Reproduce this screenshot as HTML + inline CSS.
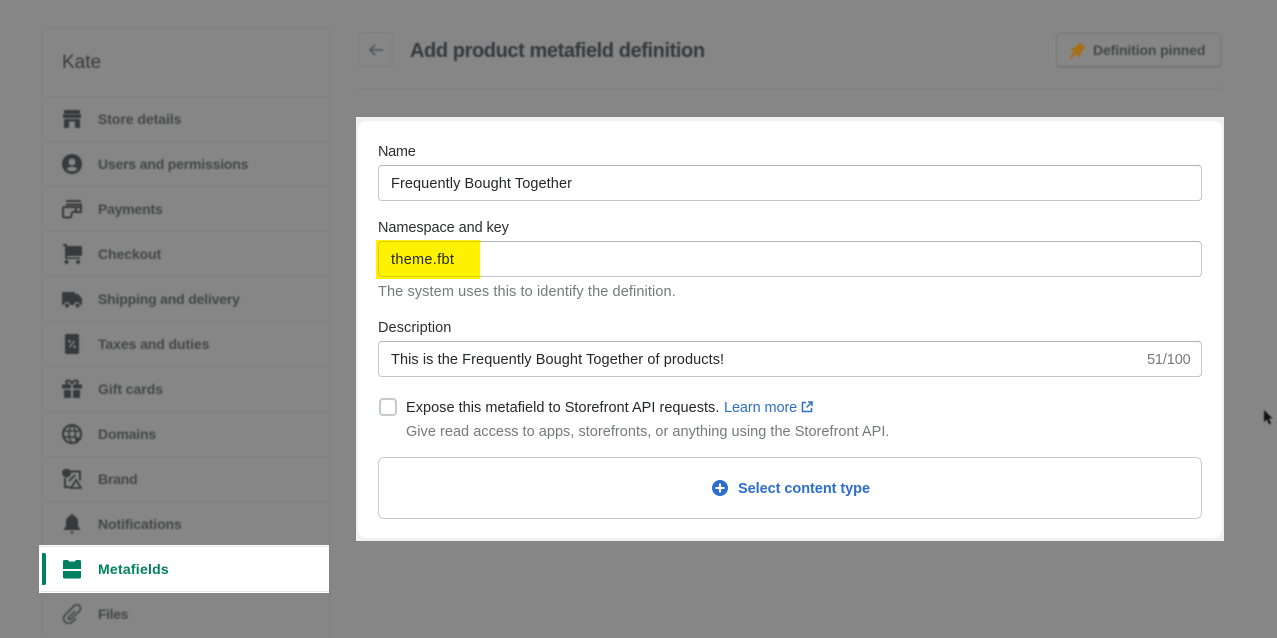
<!DOCTYPE html>
<html lang="en">
<head>
<meta charset="utf-8">
<title>Add product metafield definition</title>
<style>
html,body{margin:0;padding:0;width:1277px;height:638px;overflow:hidden}
body{position:relative;background:#868686;font-family:"Liberation Sans",Arial,sans-serif;color:#2a2b2c}
.a{position:absolute;white-space:nowrap}
#blur{position:absolute;left:0;top:0;width:1277px;height:638px;overflow:hidden;filter:blur(.9px)}
.side{position:absolute;left:42px;top:28px;width:288px;height:640px;border:1px solid #7f7f7f;border-radius:6px;box-sizing:border-box}
.div{position:absolute;left:43px;width:286px;height:1px;background:#7e7e7e}
.nav{position:absolute;left:98px;font-size:14px;line-height:18px;font-weight:700;color:#454647;white-space:nowrap}
.ic{position:absolute;left:62px;width:20px;height:20px;fill:#38393a}
.lbl{font-size:14.5px;line-height:18px;color:#2c2d2e}
.val{font-size:14.5px;line-height:18px;color:#26272a}
.help{font-size:14.5px;line-height:18px;color:#77797c}
.inp{position:absolute;box-sizing:border-box;background:#fff;border:1px solid #c4c6c9;border-top-color:#b0b2b5;border-radius:4px}
</style>
</head>
<body>
<div id="blur">
  <div class="side"></div>
  <div class="a" style="left:62px;top:52px;font-size:19px;line-height:22px;color:#3a3b3c;letter-spacing:0">Kate</div>
  <div class="div" style="top:96px"></div>
  <div class="div" style="top:141px"></div>
  <div class="div" style="top:186px"></div>
  <div class="div" style="top:231px"></div>
  <div class="div" style="top:276px"></div>
  <div class="div" style="top:321px"></div>
  <div class="div" style="top:366px"></div>
  <div class="div" style="top:411px"></div>
  <div class="div" style="top:456px"></div>
  <div class="div" style="top:501px"></div>

  <svg class="ic" style="top:109px" viewBox="0 0 20 20"><path d="M2 1h16v4H2zM1 5.500h18V9H1zM2 10h5v9H2zM13 10h5v9h-5zM7 10h6v2.500H7z"/></svg>
  <svg class="ic" style="top:154px" viewBox="0 0 20 20"><path fill-rule="evenodd" d="M10 0a10 10 0 1 0 0 20 10 10 0 0 0 0-20zm0 4.500a3.500 3.500 0 1 1 0 7 3.500 3.500 0 0 1 0-7zM4.500 15c1-1.600 3-2.300 5.500-2.300s4.500.7 5.500 2.300c-1.300 1.500-3.300 2.400-5.500 2.400S5.800 16.500 4.500 15z"/></svg>
  <svg class="ic" style="top:199px" viewBox="0 0 20 20"><path d="M4 1h15v2H4zM4 4.500h15a1 1 0 0 1 1 1V13a1 1 0 0 1-1 1h-6v-2h5V9H5V7h13V6.500H4z"/><path fill="none" stroke="#38393a" stroke-width="2" d="M1 9.500a1.500 1.500 0 0 1 1.500-1.500H14v4l-4 1.500-1 4.500-1 .5H2.500A1.500 1.500 0 0 1 1 17z"/></svg>
  <svg class="ic" style="top:244px" viewBox="0 0 20 20"><path d="M1 0h3a1 1 0 0 1 1 1v1h14a1 1 0 0 1 1 1v8a1 1 0 0 1-1 1H5v1.500h13V15H4a1 1 0 0 1-1-1V2H1z"/><circle cx="4.500" cy="18" r="2"/><circle cx="16" cy="18" r="2"/></svg>
  <svg class="ic" style="top:289px" viewBox="0 0 20 20"><path d="M1 3h11a1 1 0 0 1 1 1v1h3l4 4.500V15a1 1 0 0 1-1 1h-1a3 3 0 0 0-6 0H8a3 3 0 0 0-6 0H1a1 1 0 0 1-1-1V4a1 1 0 0 1 1-1z"/><circle cx="5" cy="16.500" r="2"/><circle cx="15.500" cy="16.500" r="2"/></svg>
  <svg class="ic" style="top:334px" viewBox="0 0 20 20"><path fill-rule="evenodd" d="M4 0h12a1 1 0 0 1 1 1v18a1 1 0 0 1-1 1H4a1 1 0 0 1-1-1V1a1 1 0 0 1 1-1zm8 6.500L7 12.500l1 1 5-6zM7.500 6a1.300 1.300 0 1 0 0 2.600 1.300 1.300 0 0 0 0-2.600zm5 5.500a1.300 1.300 0 1 0 0 2.600 1.300 1.300 0 0 0 0-2.600z"/></svg>
  <svg class="ic" style="top:379px" viewBox="0 0 20 20"><path d="M0 5.500h9v4H0zM11 5.500h9v4h-9zM2 11h7v8H3a1 1 0 0 1-1-1zM11 11h7v7a1 1 0 0 1-1 1h-6z"/><path fill="none" stroke="#38393a" stroke-width="2" d="M10 5C9 2 7 1 5.500 1.500 3.500 2.300 4 5 6.500 5.500M10 5c1-3 3-4 4.500-3.500 2 .8 1.500 3.500-1 4"/></svg>
  <svg class="ic" style="top:424px" viewBox="0 0 20 20"><circle cx="10" cy="10" r="9" fill="none" stroke="#38393a" stroke-width="2"/><path fill="none" stroke="#38393a" stroke-width="1.500" d="M1 7h18M1 13h12M10 1C6 5 6 14 10 19M10 1c4 4 4 9 3 12"/><path d="M12 12l8 3-3 1.500L15 20z"/></svg>
  <svg class="ic" style="top:469px" viewBox="0 0 20 20"><path fill="none" stroke="#38393a" stroke-width="2" d="M5 2.500h13v9M3 9v9h5"/><circle cx="4.500" cy="4" r="4.500"/><path fill="none" stroke="#38393a" stroke-width="1.800" d="M7 12l6-6M14 11l-5 8h10z"/></svg>
  <svg class="ic" style="top:514px" viewBox="0 0 20 20"><path d="M10 0a1.500 1.500 0 0 1 1.500 1.800C14.500 2.600 16 5 16 8v4l2 3v1H2v-1l2-3V8c0-3 1.500-5.400 4.500-6.200A1.500 1.500 0 0 1 10 0z"/><rect x="8.500" y="17.500" width="3" height="2" rx="1"/></svg>
  <svg class="ic" style="top:604px" viewBox="0 0 20 20"><path fill="none" stroke="#48494a" stroke-width="1.800" stroke-linecap="round" d="M12.500 7.500L6.500 13.500a1.500 1.500 0 0 0 2 2L17.500 7a3.700 3.700 0 0 0-5.500-5L2.500 11.500a5 5 0 0 0 7 7L13.500 15"/></svg>

  <div class="nav" style="top:110px;letter-spacing:-.05px">Store details</div>
  <div class="nav" style="top:155px;letter-spacing:-.18px">Users and permissions</div>
  <div class="nav" style="top:200px;letter-spacing:-.2px">Payments</div>
  <div class="nav" style="top:245px;letter-spacing:-.07px">Checkout</div>
  <div class="nav" style="top:290px;letter-spacing:-.18px">Shipping and delivery</div>
  <div class="nav" style="top:335px;letter-spacing:-.08px">Taxes and duties</div>
  <div class="nav" style="top:380px;letter-spacing:-.04px">Gift cards</div>
  <div class="nav" style="top:425px;letter-spacing:-.15px">Domains</div>
  <div class="nav" style="top:470px;letter-spacing:-.2px">Brand</div>
  <div class="nav" style="top:515px;letter-spacing:-.08px">Notifications</div>
  <div class="nav" style="top:605px;letter-spacing:-.4px">Files</div>

  <div class="a" style="left:358px;top:32px;width:35px;height:35px;box-sizing:border-box;border:1px solid #7a7a7a;border-radius:4px"></div>
  <svg class="a" style="left:366px;top:40px;width:20px;height:20px" viewBox="0 0 20 20"><path fill="none" stroke="#55565a" stroke-width="1.800" d="M17 10H4M9 5l-5 5 5 5"/></svg>
  <div class="a" style="left:410px;top:39px;font-size:20px;line-height:24px;font-weight:700;color:#37383a;letter-spacing:-.41px">Add product metafield definition</div>
  <div class="a" style="left:358px;top:88px;width:864px;height:1px;background:#7e7e7e"></div>
  <div class="a" style="left:1056px;top:33px;width:165px;height:34px;box-sizing:border-box;border:1px solid #767676;border-radius:4px;box-shadow:0 1px 0 #777"></div>
  <svg class="a" style="left:1069px;top:41px;width:18px;height:18px" viewBox="0 0 18 18"><path fill="#a86f15" d="M10.500 1l6.500 6-1.500 1-1 0-3 4.500v2.500l-1 1-3-3L1.500 18 0 17l5-6.500-3-3 1-1h2.500L10 3V2z"/></svg>
  <div class="a" style="left:1093px;top:41px;font-size:14px;line-height:18px;font-weight:700;color:#454647;letter-spacing:-.12px">Definition pinned</div>

  <svg class="a" style="left:1263px;top:410px;width:12px;height:17px" viewBox="0 0 12 17"><path fill="#111" d="M1 0l8.500 8.500H6l2 5-2 1-2-5-3 2.500z"/></svg>
</div>

<!-- Highlighted nav row -->
<div class="a" style="left:39px;top:545px;width:290px;height:48px;background:#fff"></div>
<div class="a" style="left:39px;top:546px;width:290px;height:1px;background:#e3e3e3"></div>
<div class="a" style="left:39px;top:591px;width:290px;height:1px;background:#e3e3e3"></div>
<div class="a" style="left:42px;top:553px;width:4px;height:32px;background:#008060;border-radius:0 2px 2px 0"></div>
<svg class="a" style="left:62px;top:559px;width:20px;height:20px" viewBox="0 0 20 20"><path fill="#008060" d="M1 2.500A1.500 1.500 0 0 1 2.500 1H6l1 1.500h6L14 1h3.500A1.500 1.500 0 0 1 19 2.500V10H1zM1 12h18v6a1.500 1.500 0 0 1-1.500 1.500h-15A1.500 1.500 0 0 1 1 18z"/></svg>
<div class="a" style="left:98px;top:560px;font-size:14px;line-height:18px;font-weight:700;color:#008060;letter-spacing:.25px">Metafields</div>

<!-- Form card -->
<div class="a" style="left:356px;top:117px;width:868px;height:424px;background:#f1f1f1"></div>
<div class="a" style="left:358px;top:121px;width:864px;height:417px;background:#fff;border-radius:8px"></div>

<div class="a lbl" style="left:378px;top:143px;letter-spacing:-.3px">Name</div>
<div class="inp" style="left:378px;top:165px;width:824px;height:36px"></div>
<div class="a val" style="left:391px;top:175px;letter-spacing:.09px">Frequently Bought Together</div>

<div class="a lbl" style="left:378px;top:219px;letter-spacing:-.08px">Namespace and key</div>
<div class="inp" style="left:378px;top:241px;width:824px;height:36px"></div>
<div class="a" style="left:376px;top:240px;width:104px;height:39px;background:#fff200"></div>
<div class="a" style="left:378px;top:241px;width:103px;height:36px;box-sizing:border-box;border:1px solid #d8d108;border-right:0;border-radius:4px 0 0 4px"></div>
<div class="a val" style="left:391px;top:251px;letter-spacing:.3px">theme.fbt</div>
<div class="a help" style="left:378px;top:283px;letter-spacing:.11px">The system uses this to identify the definition.</div>

<div class="a lbl" style="left:378px;top:319px;letter-spacing:.08px">Description</div>
<div class="inp" style="left:378px;top:341px;width:824px;height:36px"></div>
<div class="a val" style="left:391px;top:351px;letter-spacing:.09px">This is the Frequently Bought Together of products!</div>
<div class="a help" style="left:1147px;top:351px;letter-spacing:-.13px">51/100</div>

<div class="a" style="left:379px;top:398px;width:18px;height:18px;box-sizing:border-box;border:2px solid #c6cacd;border-radius:4px;background:#fff"></div>
<div class="a val" style="left:406px;top:399px;letter-spacing:.03px">Expose this metafield to Storefront API requests.</div>
<div class="a" style="left:724px;top:399px;font-size:14.5px;line-height:18px;color:#2c6ecb;letter-spacing:-.1px">Learn more</div>
<svg class="a" style="left:801px;top:401px;width:12px;height:12px" viewBox="0 0 12 12"><path fill="none" stroke="#2c6ecb" stroke-width="1.500" d="M5 1.500H1.500v9h9V7M7 1h4v4M11 1L5.500 6.500"/></svg>
<div class="a help" style="left:406px;top:423px;letter-spacing:.03px">Give read access to apps, storefronts, or anything using the Storefront API.</div>

<div class="a" style="left:378px;top:457px;width:824px;height:62px;box-sizing:border-box;border:1px solid #c9cccf;border-radius:6px"></div>
<svg class="a" style="left:712px;top:480px;width:16px;height:16px" viewBox="0 0 16 16"><circle cx="8" cy="8" r="8" fill="#2c6ecb"/><path fill="#fff" d="M7 3.500h2V7h3.500v2H9v3.500H7V9H3.500V7H7z"/></svg>
<div class="a" style="left:738px;top:480px;font-size:14.5px;line-height:18px;font-weight:700;color:#2c6ecb;letter-spacing:-.05px">Select content type</div>
</body>
</html>
